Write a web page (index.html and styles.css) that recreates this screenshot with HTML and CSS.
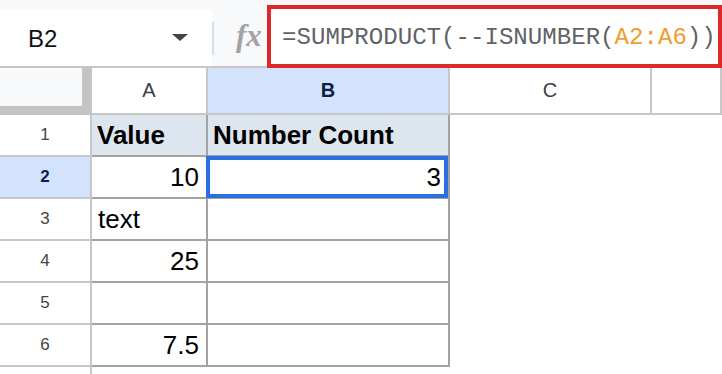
FILE: index.html
```html
<!DOCTYPE html>
<html>
<head>
    <meta charset="UTF-8">
    <title>SUMPRODUCT ISNUMBER</title>
    <link rel="stylesheet" href="styles.css">
</head>
<body>
    <div class="toolbar">
        <div class="name-box">
            <span class="cell-ref">B2</span>
            <span class="caret"></span>
        </div>
        <div class="divider"></div>
        <div class="fx">fx</div>
        <div class="formula">=SUMPRODUCT(--ISNUMBER(<span class="range">A2:A6</span>))</div>
    </div>

    <div class="sheet">
        <!-- column headers -->
        <div class="corner"><div class="corner-inner"></div></div>
        <div class="col-head">A</div>
        <div class="col-head selected">B</div>
        <div class="col-head">C</div>
        <div class="col-head"></div>

        <!-- row 1 -->
        <div class="row-head">1</div>
        <div class="cell title">Value</div>
        <div class="cell title">Number Count</div>
        <div class="blank"></div>
        <div class="blank"></div>

        <!-- row 2 -->
        <div class="row-head selected">2</div>
        <div class="cell num">10</div>
        <div class="cell num active">3</div>
        <div class="blank"></div>
        <div class="blank"></div>

        <!-- row 3 -->
        <div class="row-head">3</div>
        <div class="cell">text</div>
        <div class="cell"></div>
        <div class="blank"></div>
        <div class="blank"></div>

        <!-- row 4 -->
        <div class="row-head">4</div>
        <div class="cell num">25</div>
        <div class="cell"></div>
        <div class="blank"></div>
        <div class="blank"></div>

        <!-- row 5 -->
        <div class="row-head">5</div>
        <div class="cell"></div>
        <div class="cell"></div>
        <div class="blank"></div>
        <div class="blank"></div>

        <!-- row 6 -->
        <div class="row-head">6</div>
        <div class="cell num">7.5</div>
        <div class="cell"></div>
        <div class="blank"></div>
        <div class="blank"></div>

        <!-- rest -->
        <div class="row-head filler"></div>
    </div>
</body>
</html>
```

FILE: styles.css
```css
body {
    margin: 0;
    font-family: "Liberation Sans", Arial, sans-serif;
    background-color: #fff;
    width: 722px;
    height: 374px;
    overflow: hidden;
}

/* formula bar */
.toolbar {
    display: flex;
    height: 66px;
    background-color: #f8f9fa;
}
.name-box {
    display: flex;
    align-items: center;
    box-sizing: border-box;
    width: 212px;
    height: 56px;
    margin-top: 10px;
    padding: 0 24px 0 28px;
    background-color: #fff;
}
.cell-ref {
    font-size: 24px;
    color: #111;
    padding-top: 1px;
}
.caret {
    margin-left: auto;
    width: 0;
    height: 0;
    border-left: 8px solid transparent;
    border-right: 8px solid transparent;
    border-top: 7px solid #444;
    margin-bottom: 2px;
}
.divider {
    width: 2px;
    height: 33px;
    margin-top: 22px;
    background-color: #d5deeb;
}
.fx {
    width: 53px;
    box-sizing: border-box;
    padding: 0 0 0 22px;
    font-family: "Liberation Serif", "DejaVu Serif", serif;
    font-style: italic;
    font-weight: bold;
    font-size: 31px;
    line-height: 72px;
    color: #a3a3a3;
}
.formula {
    flex: 1;
    position: relative;
    z-index: 1;
    box-sizing: border-box;
    height: 63px;
    margin-top: 5px;
    padding: 2px 0 0 11px;
    border: 4px solid #dc2828;
    background-color: #fff;
    font-family: "Liberation Mono", "DejaVu Sans Mono", monospace;
    font-size: 24.1px;
    line-height: 53px;
    color: #5f6368;
    white-space: nowrap;
}
.range {
    color: #f29b2c;
}

/* grid */
.sheet {
    display: grid;
    grid-template-columns: 92px 116px 242px 202px 1fr;
    grid-template-rows: 49px repeat(6, 42px) 1fr;
    height: 308px;
}
.corner {
    background-color: #c4c4c4;
}
.corner-inner {
    width: 82px;
    height: 38px;
    margin-top: 2px;
    background-color: #f8f9fa;
}
.col-head {
    display: flex;
    align-items: center;
    justify-content: center;
    border-top: 2px solid #c7c7c7;
    border-bottom: 2px solid #c7c7c7;
    border-right: 2px solid #c7c7c7;
    font-size: 20px;
    color: #3c4043;
}
.col-head:last-child {
    border-right: none;
}
.col-head.selected,
.row-head.selected {
    background-color: #d3e3fd;
    color: #0b1f4a;
    font-weight: bold;
}
.row-head {
    display: flex;
    align-items: center;
    justify-content: center;
    border-right: 2px solid #c7c7c7;
    border-bottom: 2px solid #c7c7c7;
    font-size: 17px;
    color: #444;
}
.row-head.filler {
    border-bottom: none;
}
.cell {
    display: flex;
    align-items: flex-end;
    padding: 0 7px 4px 6px;
    border-right: 2px solid #a3a3a3;
    border-bottom: 2px solid #a3a3a3;
    font-size: 26px;
    color: #000;
}
.cell.title {
    background-color: #dde5ee;
    font-weight: bold;
    padding-left: 5px;
}
.cell.num {
    justify-content: flex-end;
}
.cell.active {
    position: relative;
}
.cell.active::after {
    content: "";
    position: absolute;
    left: -2px;
    top: -1px;
    width: 242px;
    height: 42px;
    box-sizing: border-box;
    border: 4px solid #2a6fe0;
}
```
